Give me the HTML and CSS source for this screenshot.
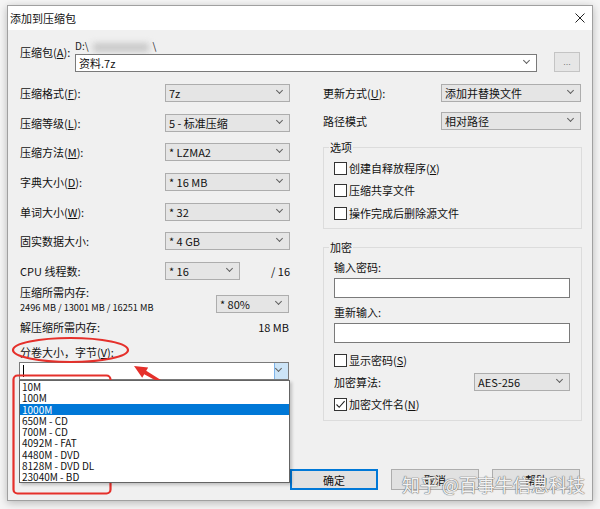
FILE: index.html
```html
<!DOCTYPE html>
<html lang="zh-CN">
<head>
    <meta charset="UTF-8">
    <title>添加到压缩包</title>
    <link rel="stylesheet" href="styles.css">
</head>
<body>
    <div class="dialog">
        <div class="titlebar">
            <span class="title">添加到压缩包</span>
            <svg class="close" width="10" height="10" viewBox="0 0 10 10"><path d="M0.5 0.5L9.5 9.5M9.5 0.5L0.5 9.5" stroke="#222" stroke-width="1"/></svg>
        </div>

        <div class="content">
            <div class="archive-row">
                <span class="archive-label">压缩包(<u>A</u>):</span>
                <div class="archive-field">
                    <div class="path">D:\<span class="smudge"></span>\</div>
                    <div class="combo edit">资料.7z</div>
                </div>
                <button class="browse">...</button>
            </div>

            <div class="columns">
                <div class="left">
                    <div class="row"><span>压缩格式(<u>F</u>):</span><div class="combo">7z</div></div>
                    <div class="row"><span>压缩等级(<u>L</u>):</span><div class="combo">5 - 标准压缩</div></div>
                    <div class="row"><span>压缩方法(<u>M</u>):</span><div class="combo">* LZMA2</div></div>
                    <div class="row"><span>字典大小(<u>D</u>):</span><div class="combo">* 16 MB</div></div>
                    <div class="row"><span>单词大小(<u>W</u>):</span><div class="combo">* 32</div></div>
                    <div class="row"><span>固实数据大小:</span><div class="combo">* 4 GB</div></div>
                    <div class="row cpu"><span>CPU 线程数:</span><div class="combo">* 16</div><span class="total">/ 16</span></div>

                    <div class="memory">
                        <div>
                            <div class="line">压缩所需内存:</div>
                            <div class="line small">2496 MB / 13001 MB / 16251 MB</div>
                        </div>
                        <div class="combo pct">* 80%</div>
                    </div>
                    <div class="line split"><span>解压缩所需内存:</span><span>18 MB</span></div>
                    <div class="line volume-label">分卷大小，字节(<u>V</u>):</div>
                    <div class="combo edit volume">
                        <span class="caret"></span>
                        <span class="drop-btn"></span>
                        <ul class="dropdown">
                            <li>10M</li>
                            <li>100M</li>
                            <li class="selected">1000M</li>
                            <li>650M - CD</li>
                            <li>700M - CD</li>
                            <li>4092M - FAT</li>
                            <li>4480M - DVD</li>
                            <li>8128M - DVD DL</li>
                            <li>23040M - BD</li>
                        </ul>
                    </div>
                </div>

                <div class="right">
                    <div class="rrow"><span>更新方式(<u>U</u>):</span><div class="combo">添加并替换文件</div></div>
                    <div class="rrow"><span>路径模式</span><div class="combo">相对路径</div></div>

                    <fieldset class="group">
                        <legend>选项</legend>
                        <div class="check"><span class="box"></span>创建自释放程序(<u>X</u>)</div>
                        <div class="check"><span class="box"></span>压缩共享文件</div>
                        <div class="check third"><span class="box"></span>操作完成后删除源文件</div>
                    </fieldset>

                    <fieldset class="group crypt">
                        <legend>加密</legend>
                        <div class="line first">输入密码:</div>
                        <div class="pw"></div>
                        <div class="line again">重新输入:</div>
                        <div class="pw"></div>
                        <div class="check show"><span class="box"></span>显示密码(<u>S</u>)</div>
                        <div class="algo"><span>加密算法:</span><div class="combo">AES-256</div></div>
                        <div class="check names">
                            <span class="box"><svg width="11" height="11" viewBox="0 0 11 11"><path d="M1.5 5.5L4.2 8.3L9.6 2.2" fill="none" stroke="#222" stroke-width="1.1"/></svg></span>加密文件名(<u>N</u>)
                        </div>
                    </fieldset>
                </div>
            </div>

            <div class="buttons">
                <button class="btn default">确定</button>
                <button class="btn">取消</button>
                <button class="btn">帮助</button>
            </div>
        </div>
    </div>

    <div class="watermark">知乎 @百事牛信息科技</div>

    <!-- red annotations drawn over the screenshot -->
    <svg class="marks" width="600" height="509" viewBox="0 0 600 509">
        <ellipse cx="70.5" cy="350" rx="57.5" ry="12" fill="none" stroke="#e5302b" stroke-width="2.2"/>
        <rect x="13.5" y="375.5" width="97" height="118" rx="4" fill="none" stroke="#e5302b" stroke-width="2.2"/>
        <polygon fill="#e5302b" points="134,366 148.2,367.4 146.2,370.8 182.3,393.6 181.7,394.4 144.2,374.3 142.2,377.7"/>
        <polygon fill="#e5302b" points="125,455 138.5,450.4 138.1,454.4 190.1,461.5 189.9,462.5 137.7,458.4 137.3,462.4"/>
    </svg>
</body>
</html>
```

FILE: styles.css
```css
* {
    box-sizing: border-box;
}
body {
    margin: 0;
    padding: 5px 0 0 7px;
    width: 600px;
    height: 509px;
    position: relative;
    overflow: hidden;
    background: #f5f5f5;
    font-family: "Noto Sans CJK SC", "Noto Sans", sans-serif;
    font-size: 11px;
    color: #111;
}
u { text-decoration: underline; text-underline-offset: 1px; }

.dialog {
    width: 586px;
    height: 496px;
    border: 1px solid #a0a0a0;
    background: #f0f0f0;
    box-shadow: 0 2px 8px rgba(0,0,0,0.25);
    display: flex;
    flex-direction: column;
}
.titlebar {
    height: 24px;
    background: #fff;
    display: flex;
    align-items: center;
    justify-content: space-between;
    padding: 0 7px 0 2px;
}
.content {
    flex: 1;
    display: flex;
    flex-direction: column;
    padding: 9px 10px 10px 12px;
}

/* archive name */
.archive-row { display: flex; align-items: flex-start; }
.archive-label { width: 55px; margin-top: 6px; line-height: 14px; }
.archive-field { width: 462px; }
.path { height: 15px; line-height: 14px; font-size: 10px; color: #222; }
.smudge {
    display: inline-block;
    width: 56px;
    height: 9px;
    margin: 0 4px;
    background: #c8c8c8;
    filter: blur(3px);
    vertical-align: middle;
}
.browse {
    margin: 13px 0 0 17px;
    width: 26px;
    height: 20px;
    padding: 0;
    border: 1px solid #c4c4c4;
    background: #e6e6e6;
    color: #777;
    font-size: 9px;
    line-height: 14px;
}

/* combo boxes */
.combo {
    position: relative;
    height: 18px;
    border: 1px solid #adadad;
    background: #e5e5e5;
    padding-left: 3px;
    line-height: 16px;
    white-space: nowrap;
}
.combo::after {
    content: "";
    position: absolute;
    right: 7px;
    top: 3px;
    width: 4px;
    height: 4px;
    border-right: 1px solid #606060;
    border-bottom: 1px solid #606060;
    transform: rotate(45deg);
}
.combo.edit { background: #fff; border-color: #7a7a7a; }

.columns {
    display: grid;
    grid-template-columns: 270px 259px;
    column-gap: 33px;
    margin-top: 12px;
}
.row {
    display: grid;
    grid-template-columns: 145px 125px;
    align-items: center;
    height: 18px;
    line-height: 14px;
    margin-bottom: 11.7px;
}
.row.cpu { grid-template-columns: 145px 75px 1fr; margin-bottom: 5px; }
.total { justify-self: end; }

.line { height: 14px; line-height: 14px; white-space: nowrap; }
.small { font-size: 9.2px; margin-top: 1px; }
.memory { display: flex; justify-content: space-between; }
.pct { width: 73px; margin-top: 10px; margin-right: 1px; }
.split { display: flex; justify-content: space-between; margin-top: 6px; padding-right: 1px; }
.volume-label { margin-top: 11px; }
.volume { margin-top: 3px; margin-left: -1px; width: 270px; border-color: #555; }
.volume::after { z-index: 1; }
.caret {
    position: absolute;
    left: 3px;
    top: 2px;
    width: 1px;
    height: 12px;
    background: #000;
}
.drop-btn {
    position: absolute;
    right: 0;
    top: 0;
    width: 14px;
    height: 16px;
    background: #cce4f7;
    border-left: 1px solid #7eb4ea;
}
.dropdown {
    position: absolute;
    left: -1px;
    top: 17px;
    width: 271px;
    height: 103px;
    margin: 0;
    padding: 0;
    list-style: none;
    background: #fff;
    border: 1px solid #646464;
    box-shadow: 2px 2px 3px rgba(0,0,0,0.2);
    z-index: 2;
}
.dropdown li {
    height: 11.25px;
    line-height: 11.25px;
    padding-left: 2px;
    font-size: 10px;
    color: #111;
}
.dropdown li.selected { background: #0078d7; color: #fff; }

/* right column */
.rrow {
    display: grid;
    grid-template-columns: 118px 140px;
    align-items: center;
    height: 18px;
    line-height: 14px;
}
.rrow + .rrow { margin-top: 10px; }
.group {
    margin: 10px 0 0;
    padding: 0 10px 7px 10px;
    border: 1px solid #dcdcdc;
    min-width: 0;
}
.group legend { padding: 0 1px; margin-left: -5px; line-height: 14px; }
.check { display: flex; align-items: center; height: 16px; margin-top: 6px; white-space: nowrap; }
.check.third { margin-top: 7px; }
.box {
    width: 13px;
    height: 13px;
    border: 1px solid #333;
    background: #fff;
    margin-right: 2px;
    display: flex;
    align-items: center;
    justify-content: center;
}
.crypt { margin-top: 11px; padding-bottom: 8px; }
.crypt .first { margin-top: 6px; }
.crypt .again { margin-top: 7px; }
.pw {
    width: 236px;
    height: 20px;
    margin-top: 4px;
    border: 1px solid #7a7a7a;
    background: #fff;
}
.check.show { margin-top: 9px; }
.algo {
    display: grid;
    grid-template-columns: 140px 96px;
    align-items: center;
    height: 18px;
    margin-top: 5px;
}
.check.names { margin-top: 5px; }

/* dialog buttons */
.buttons {
    margin-top: auto;
    display: flex;
    justify-content: flex-end;
    gap: 13px;
    padding-right: 2px;
}
.btn {
    width: 88px;
    height: 21px;
    padding: 0;
    border: 1px solid #adadad;
    background: #e1e1e1;
    font-family: inherit;
    font-size: 11px;
    color: #111;
}
.btn.default { border-color: #0078d7; box-shadow: inset 0 0 0 1px #0078d7; }

.watermark {
    position: absolute;
    left: 402px;
    top: 473px;
    font-size: 18px;
    line-height: 22px;
    color: rgba(255,255,255,0.92);
    text-shadow: 0 0 1px #777, 0 0 1px #777, 0 0 1px #777;
    white-space: nowrap;
}
.marks { position: absolute; left: 0; top: 0; pointer-events: none; }
```
